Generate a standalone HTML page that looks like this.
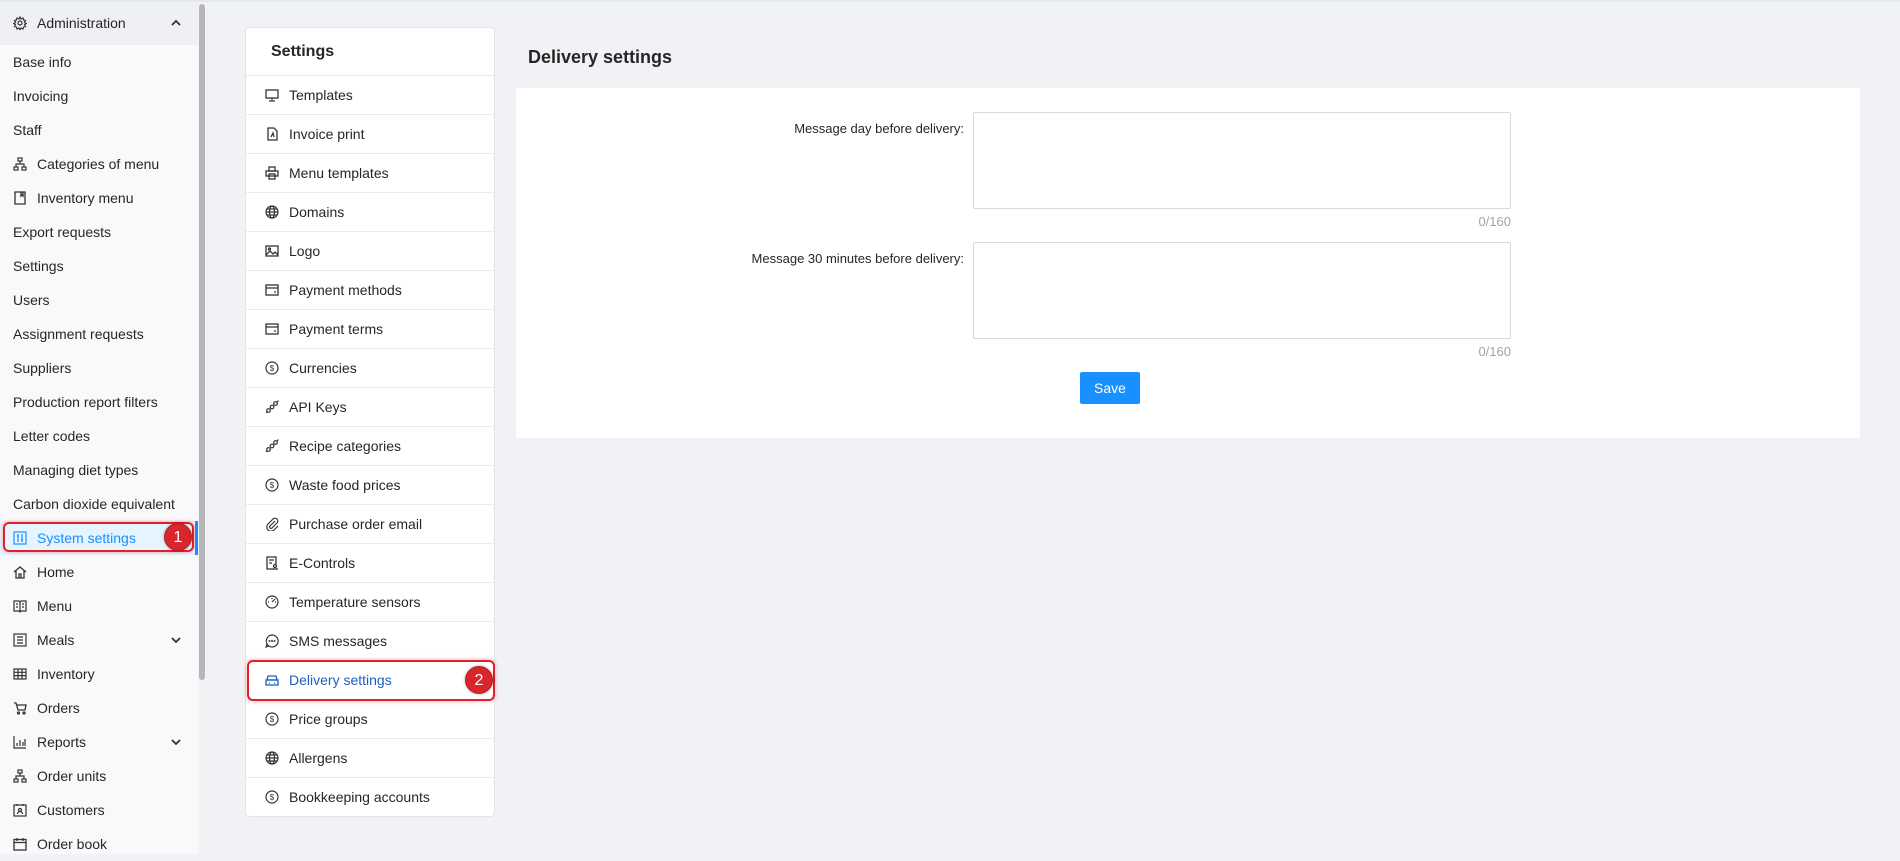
<!DOCTYPE html>
<html><head><meta charset="utf-8"><style>
*{box-sizing:border-box;margin:0;padding:0}
body{width:1900px;height:852px;overflow:hidden;background:#f0f2f5;font-family:"Liberation Sans",sans-serif;color:#262626;position:relative;border-top:2px solid #e4e7ec}
.sb{position:absolute;left:0;top:0;width:198px;height:852px;background:#f8f9fa}
.scroll{position:absolute;left:199px;top:2px;width:6px;height:676px;background:#b4b6bc;border-radius:3px}
.sbtrack{position:absolute;left:198px;top:0;width:9px;height:852px;background:#f3f3f5}
.it{position:absolute;left:0;width:198px;height:34px;line-height:34px;font-size:14px;padding-left:13px;color:#262626;white-space:nowrap}
.it.ic{padding-left:37px}
.it svg{position:absolute;left:13px;top:10px}
.it svg.chev{position:absolute;left:170px;top:12px}
.card{position:absolute;left:245px;top:25px;width:250px;height:790px;background:#fff;border:1px solid #e3e5e8;border-radius:4px}
.ct{height:48px;line-height:48px;padding-left:25px;font-size:16px;font-weight:bold;border-bottom:1px solid #e8e8e8}
.row{height:39px;line-height:38px;border-bottom:1px solid #ebebeb;font-size:14px;padding-left:43px;position:relative;white-space:nowrap}
.row svg{position:absolute;left:19px;top:12px}
.row:last-child{border-bottom:none}
.red{position:absolute;border:2px solid #e0202a;border-radius:6px;box-shadow:0 0 4px rgba(224,32,42,.4)}
.badge{position:absolute;width:28px;height:28px;border-radius:50%;background:#d9262c;color:#fff;font-size:16px;text-align:center;line-height:28px;box-shadow:0 0 3px rgba(0,0,0,.3);border:1px solid #b81d22}
h1{position:absolute;left:528px;top:45px;font-size:18px;font-weight:bold;color:#262626}
.panel{position:absolute;left:516px;top:86px;width:1344px;height:350px;background:#fff}
.lbl{position:absolute;right:936px;font-size:13px;color:#262626;text-align:right;white-space:nowrap}
.ta{position:absolute;left:973px;width:538px;height:97px;border:1px solid #d9d9d9;border-radius:2px;background:#fff}
.cnt{position:absolute;right:389px;font-size:13px;color:#a3a3a3}
.btn{position:absolute;left:1080px;top:370px;width:60px;height:32px;background:#1890ff;color:#fff;font-size:14px;text-align:center;line-height:32px;border-radius:2px}
</style></head><body>
<svg width="0" height="0" style="position:absolute"><defs>
<g id="mon" fill="none" stroke="#333" stroke-width="1.3"><rect x="1" y="2" width="12" height="8"/><path d="M7 10v2M4 13h6"/></g>
<g id="pdf" fill="none" stroke="#333" stroke-width="1.3"><path d="M3 1h6l3 3v9H3z"/><path d="M6 10l2-4 1 4"/></g>
<g id="prn" fill="none" stroke="#333" stroke-width="1.3"><rect x="1" y="5" width="12" height="5"/><rect x="4" y="1" width="6" height="4"/><rect x="4" y="8" width="6" height="5"/></g>
<g id="glb" fill="none" stroke="#333" stroke-width="1.2"><circle cx="7" cy="7" r="6"/><ellipse cx="7" cy="7" rx="2.5" ry="6"/><path d="M1 7h12M2 4h10M2 10h10"/></g>
<g id="img" fill="none" stroke="#333" stroke-width="1.3"><rect x="1" y="2" width="12" height="10"/><path d="M1 11l4-4 3 3 2-2 3 3"/><circle cx="4.5" cy="5" r="1"/></g>
<g id="card" fill="none" stroke="#333" stroke-width="1.3"><rect x="1" y="2" width="12" height="10"/><path d="M1 5h12M9 9h2"/></g>
<g id="usd" fill="none" stroke="#333" stroke-width="1.2"><circle cx="7" cy="7" r="6"/><text x="7" y="10" font-size="8" text-anchor="middle" fill="#333" stroke="none" font-family="Liberation Sans">$</text></g>
<g id="key" fill="none" stroke="#333" stroke-width="1.2"><circle cx="3.5" cy="10.5" r="1.8"/><circle cx="7" cy="7" r="1.8"/><circle cx="10.5" cy="3.5" r="1.8"/><path d="M1 13l1.5-1.5M12 2l1.5-1.5"/></g>
<g id="clip" fill="none" stroke="#333" stroke-width="1.2"><path d="M10 4L5 9a1.4 1.4 0 002 2l5-5a2.8 2.8 0 00-4-4L3 7a4 4 0 006 6l4-4"/></g>
<g id="ectl" fill="none" stroke="#333" stroke-width="1.3"><path d="M9 13H2V1h9v7"/><path d="M4 4h5M4 7h3"/><circle cx="10" cy="10" r="1.5"/><path d="M8 13h5"/></g>
<g id="gau" fill="none" stroke="#333" stroke-width="1.2"><circle cx="7" cy="7" r="6"/><path d="M7 7l3-3M3 7h1M10 7h1M7 3v1"/></g>
<g id="sms" fill="none" stroke="#333" stroke-width="1.2"><path d="M7 1a6 6 0 11-5 9L1 13l3-1A6 6 0 017 1z"/><circle cx="4.5" cy="7" r=".4"/><circle cx="7" cy="7" r=".4"/><circle cx="9.5" cy="7" r=".4"/></g>
<g id="car" fill="none" stroke="#1d5fbf" stroke-width="1.3"><path d="M3 3h8l1 4H2z"/><rect x="1" y="7" width="12" height="5"/><path d="M4 10h1M9 10h1"/></g>
<g id="cog" fill="none" stroke="#333" stroke-width="1.2"><circle cx="7" cy="7" r="2"/><path d="M7 1l1 2 2-1 .5 2 2 .5-1 2 2 1-2 1 1 2-2 .5-.5 2-2-1-1 2-1-2-2 1-.5-2-2-.5 1-2-2-1 2-1-1-2 2-.5.5-2 2 1z"/></g>
<g id="org" fill="none" stroke="#333" stroke-width="1.2"><rect x="5" y="1" width="4" height="3"/><rect x="1" y="10" width="4" height="3"/><rect x="9" y="10" width="4" height="3"/><path d="M7 4v3M3 10V7h8v3"/></g>
<g id="book" fill="none" stroke="#333" stroke-width="1.3"><path d="M2 1h10v12H2z"/><path d="M8 1v4l1-1 1 1V1"/></g>
<g id="sys" fill="none" stroke="#1890ff" stroke-width="1.2"><rect x="1" y="1" width="12" height="12"/><path d="M5 3v8M9 3v8M4 5h2M8 9h2"/></g>
<g id="home" fill="none" stroke="#333" stroke-width="1.3"><path d="M1 7l6-5 6 5M3 5.5V13h8V5.5M6 13V9h2v4"/></g>
<g id="menu" fill="none" stroke="#333" stroke-width="1.2"><path d="M1 2h5l1 1 1-1h5v10H8l-1 1-1-1H1zM7 3v10M3 5h2M3 8h2M9 5h2M9 8h2"/></g>
<g id="meal" fill="none" stroke="#333" stroke-width="1.2"><rect x="1" y="1" width="12" height="12"/><path d="M4 4h6M4 7h6M4 10h6"/></g>
<g id="grid" fill="none" stroke="#333" stroke-width="1.2"><rect x="1" y="2" width="12" height="10"/><path d="M1 5.3h12M1 8.6h12M5 2v10M9 2v10"/></g>
<g id="cart" fill="none" stroke="#333" stroke-width="1.3"><path d="M1 2h2l2 7h7l1-5H4"/><circle cx="5.5" cy="12" r="1"/><circle cx="11" cy="12" r="1"/></g>
<g id="bar" fill="none" stroke="#333" stroke-width="1.2"><path d="M1 1v12h12M4 11V8M7 11V5M10 11V7M12 11V4"/></g>
<g id="cust" fill="none" stroke="#333" stroke-width="1.2"><rect x="1" y="2" width="12" height="11"/><path d="M4 1v2M10 1v2"/><circle cx="7" cy="7" r="1.5"/><path d="M4.5 11a2.5 2.5 0 015 0"/></g>
<g id="cal" fill="none" stroke="#333" stroke-width="1.3"><rect x="1" y="2.5" width="12" height="10.5"/><path d="M1 5.5h12M4 1v3M10 1v3"/></g>
<path id="up" d="M2 7l4-4 4 4" fill="none" stroke="#333" stroke-width="1.8"/>
<path id="dn" d="M2 3l4 4 4-4" fill="none" stroke="#333" stroke-width="1.8"/>
</defs></svg>

<div class="sbtrack"></div>
<div class="sb">
<div class="it ic" style="top:0;height:43px;line-height:43px;background:#eef0f4"><svg width="14" height="14" style="top:14px"><use href="#cog"/></svg>Administration<svg class="chev" width="12" height="10" style="top:16px"><use href="#up"/></svg></div>
<div class="it" style="top:43px">Base info</div>
<div class="it" style="top:77px">Invoicing</div>
<div class="it" style="top:111px">Staff</div>
<div class="it ic" style="top:145px"><svg width="14" height="14"><use href="#org"/></svg>Categories of menu</div>
<div class="it ic" style="top:179px"><svg width="14" height="14"><use href="#book"/></svg>Inventory menu</div>
<div class="it" style="top:213px">Export requests</div>
<div class="it" style="top:247px">Settings</div>
<div class="it" style="top:281px">Users</div>
<div class="it" style="top:315px">Assignment requests</div>
<div class="it" style="top:349px">Suppliers</div>
<div class="it" style="top:383px">Production report filters</div>
<div class="it" style="top:417px">Letter codes</div>
<div class="it" style="top:451px">Managing diet types</div>
<div class="it" style="top:485px">Carbon dioxide equivalent</div>
<div class="it ic" style="top:519px;background:#e6f4ff;color:#1890ff;border-right:3px solid #1890ff"><svg width="14" height="14"><use href="#sys"/></svg>System settings</div>
<div class="it ic" style="top:553px"><svg width="14" height="14"><use href="#home"/></svg>Home</div>
<div class="it ic" style="top:587px"><svg width="14" height="14"><use href="#menu"/></svg>Menu</div>
<div class="it ic" style="top:621px"><svg width="14" height="14"><use href="#meal"/></svg>Meals<svg class="chev" width="12" height="10"><use href="#dn"/></svg></div>
<div class="it ic" style="top:655px"><svg width="14" height="14"><use href="#grid"/></svg>Inventory</div>
<div class="it ic" style="top:689px"><svg width="14" height="14"><use href="#cart"/></svg>Orders</div>
<div class="it ic" style="top:723px"><svg width="14" height="14"><use href="#bar"/></svg>Reports<svg class="chev" width="12" height="10"><use href="#dn"/></svg></div>
<div class="it ic" style="top:757px"><svg width="14" height="14"><use href="#org"/></svg>Order units</div>
<div class="it ic" style="top:791px"><svg width="14" height="14"><use href="#cust"/></svg>Customers</div>
<div class="it ic" style="top:825px"><svg width="14" height="14"><use href="#cal"/></svg>Order book</div>
</div>
<div class="scroll"></div>
<div class="red" style="left:3px;top:520px;width:191px;height:30px"></div>
<div class="badge" style="left:164px;top:521px">1</div>

<div class="card">
<div class="ct">Settings</div>
<div class="row"><svg width="14" height="14"><use href="#mon"/></svg>Templates</div>
<div class="row"><svg width="14" height="14"><use href="#pdf"/></svg>Invoice print</div>
<div class="row"><svg width="14" height="14"><use href="#prn"/></svg>Menu templates</div>
<div class="row"><svg width="14" height="14"><use href="#glb"/></svg>Domains</div>
<div class="row"><svg width="14" height="14"><use href="#img"/></svg>Logo</div>
<div class="row"><svg width="14" height="14"><use href="#card"/></svg>Payment methods</div>
<div class="row"><svg width="14" height="14"><use href="#card"/></svg>Payment terms</div>
<div class="row"><svg width="14" height="14"><use href="#usd"/></svg>Currencies</div>
<div class="row"><svg width="14" height="14"><use href="#key"/></svg>API Keys</div>
<div class="row"><svg width="14" height="14"><use href="#key"/></svg>Recipe categories</div>
<div class="row"><svg width="14" height="14"><use href="#usd"/></svg>Waste food prices</div>
<div class="row"><svg width="14" height="14"><use href="#clip"/></svg>Purchase order email</div>
<div class="row"><svg width="14" height="14"><use href="#ectl"/></svg>E-Controls</div>
<div class="row"><svg width="14" height="14"><use href="#gau"/></svg>Temperature sensors</div>
<div class="row"><svg width="14" height="14"><use href="#sms"/></svg>SMS messages</div>
<div class="row" style="color:#1d5fbf"><svg width="14" height="14"><use href="#car"/></svg>Delivery settings</div>
<div class="row"><svg width="14" height="14"><use href="#usd"/></svg>Price groups</div>
<div class="row"><svg width="14" height="14"><use href="#glb"/></svg>Allergens</div>
<div class="row"><svg width="14" height="14"><use href="#usd"/></svg>Bookkeeping accounts</div>
</div>
<div class="red" style="left:247px;top:658px;width:248px;height:41px"></div>
<div class="badge" style="left:465px;top:664px">2</div>

<h1>Delivery settings</h1>
<div class="panel"></div>
<div class="lbl" style="top:119px">Message day before delivery:</div>
<div class="ta" style="top:110px"></div>
<div class="cnt" style="top:212px">0/160</div>
<div class="lbl" style="top:249px">Message 30 minutes before delivery:</div>
<div class="ta" style="top:240px"></div>
<div class="cnt" style="top:342px">0/160</div>
<div class="btn">Save</div>
</body></html>
